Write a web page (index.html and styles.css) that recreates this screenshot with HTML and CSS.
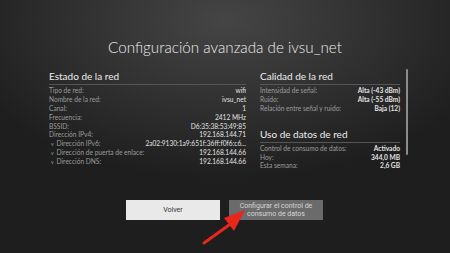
FILE: index.html
```html
<!DOCTYPE html>
<html lang="es">
<head>
    <meta charset="UTF-8">
    <meta name="viewport" content="width=device-width, initial-scale=1.0">
    <title>Configuración avanzada de ivsu_net</title>
    <link rel="stylesheet" href="styles.css">
</head>
<body>
    <h1 class="title">Configuración avanzada de ivsu_net</h1>

    <div class="panels">
        <section class="panel panel-left">
            <h2>Estado de la red</h2>
            <div class="row"><span class="label">Tipo de red:</span><span class="value">wifi</span></div>
            <div class="row"><span class="label">Nombre de la red:</span><span class="value">ivsu_net</span></div>
            <div class="row"><span class="label">Canal:</span><span class="value">1</span></div>
            <div class="row"><span class="label">Frecuencia:</span><span class="value">2412 MHz</span></div>
            <div class="row"><span class="label">BSSID:</span><span class="value">D6:35:38:53:49:85</span></div>
            <div class="row"><span class="label">Dirección IPv4:</span><span class="value">192.168.144.71</span></div>
            <div class="row"><span class="label"><i class="chev">v</i>Dirección IPv6:</span><span class="value">2a02:9130:1a9:651f:36ff:f0f6:c6...</span></div>
            <div class="row"><span class="label"><i class="chev">v</i>Dirección de puerta de enlace:</span><span class="value">192.168.144.66</span></div>
            <div class="row"><span class="label"><i class="chev">v</i>Dirección DNS:</span><span class="value">192.168.144.66</span></div>
        </section>

        <div class="panel panel-right">
            <section>
                <h2>Calidad de la red</h2>
                <div class="row"><span class="label">Intensidad de señal:</span><span class="value bold">Alta (-43 dBm)</span></div>
                <div class="row"><span class="label">Ruido:</span><span class="value bold">Alta (-55 dBm)</span></div>
                <div class="row"><span class="label">Relación entre señal y ruido:</span><span class="value bold">Baja (12)</span></div>
            </section>
            <section class="usage">
                <h2>Uso de datos de red</h2>
                <div class="row"><span class="label">Control de consumo de datos:</span><span class="value bold">Activado</span></div>
                <div class="row"><span class="label">Hoy:</span><span class="value bold">344,0 MB</span></div>
                <div class="row"><span class="label">Esta semana:</span><span class="value bold">2,6 GB</span></div>
            </section>
        </div>

        <div class="scrollbar"></div>
    </div>

    <div class="actions">
        <button class="btn btn-light">Volver</button>
        <button class="btn btn-dark">Configurar el control de consumo de datos</button>
    </div>

    <!-- flecha roja de la captura -->
    <svg class="arrow" width="60" height="40" viewBox="0 0 60 40">
        <line x1="3" y1="36" x2="28" y2="18" stroke="#e8261c" stroke-width="3" stroke-linecap="round"/>
        <polygon points="44,3 23,11 33,24" fill="#e8261c"/>
    </svg>
</body>
</html>
```

FILE: styles.css
```css
body {
    margin: 0;
    width: 450px;
    height: 253px;
    overflow: hidden;
    position: relative;
    font-family: "Lato", "Open Sans", sans-serif;
    color: #e6e6e6;
    background: radial-gradient(ellipse 280px 160px at 225px 20px, #454545 0%, #2e2e2e 60%, #1e1e1e 100%) #1d1d1d;
}

.title {
    margin: 0;
    padding-top: 36px;
    height: 22px;
    text-align: center;
    font-size: 15.2px;
    font-weight: 300;
    line-height: 22px;
    color: #ececec;
}

.panels { display: flex; margin-top: 11px; padding-left: 49px; }
.panel h2 {
    margin: 0;
    font-size: 10px;
    font-weight: normal;
    line-height: 14px;
    color: #ededed;
    border-bottom: 1px solid #555;
    padding-bottom: 1px;
    margin-bottom: 1px;
}
.panel-left { width: 197px; }
.panel-right { width: 140px; margin-left: 14px; }
.usage { margin-top: 14px; }

.row {
    display: flex;
    justify-content: space-between;
    gap: 6px;
    height: 8.9px;
    line-height: 8.9px;
    font-size: 6.6px;
    white-space: nowrap;
}
.label { color: #9c9c9c; }
.value { color: #e2e2e2; }
.bold { font-weight: bold; }
.chev { font-style: normal; font-size: 5px; margin: 0 3px 0 2px; }

.scrollbar {
    width: 2px;
    height: 86px;
    margin-left: 6px;
    background: #8c8c8c;
    border-radius: 1px;
}

.actions { display: flex; justify-content: center; gap: 9px; margin-top: 30px; margin-left: -1px; }
.btn {
    width: 94px;
    height: 20px;
    border: none;
    padding: 0 4px;
    font-family: "Roboto", "Liberation Sans", sans-serif;
    font-size: 7px;
    line-height: 8px;
}
.btn-light { background: #e9e9e9; color: #333; }
.btn-dark { background: #6b6b6b; color: #d6d6d6; }

.arrow { position: absolute; left: 201px; top: 207px; }
```
